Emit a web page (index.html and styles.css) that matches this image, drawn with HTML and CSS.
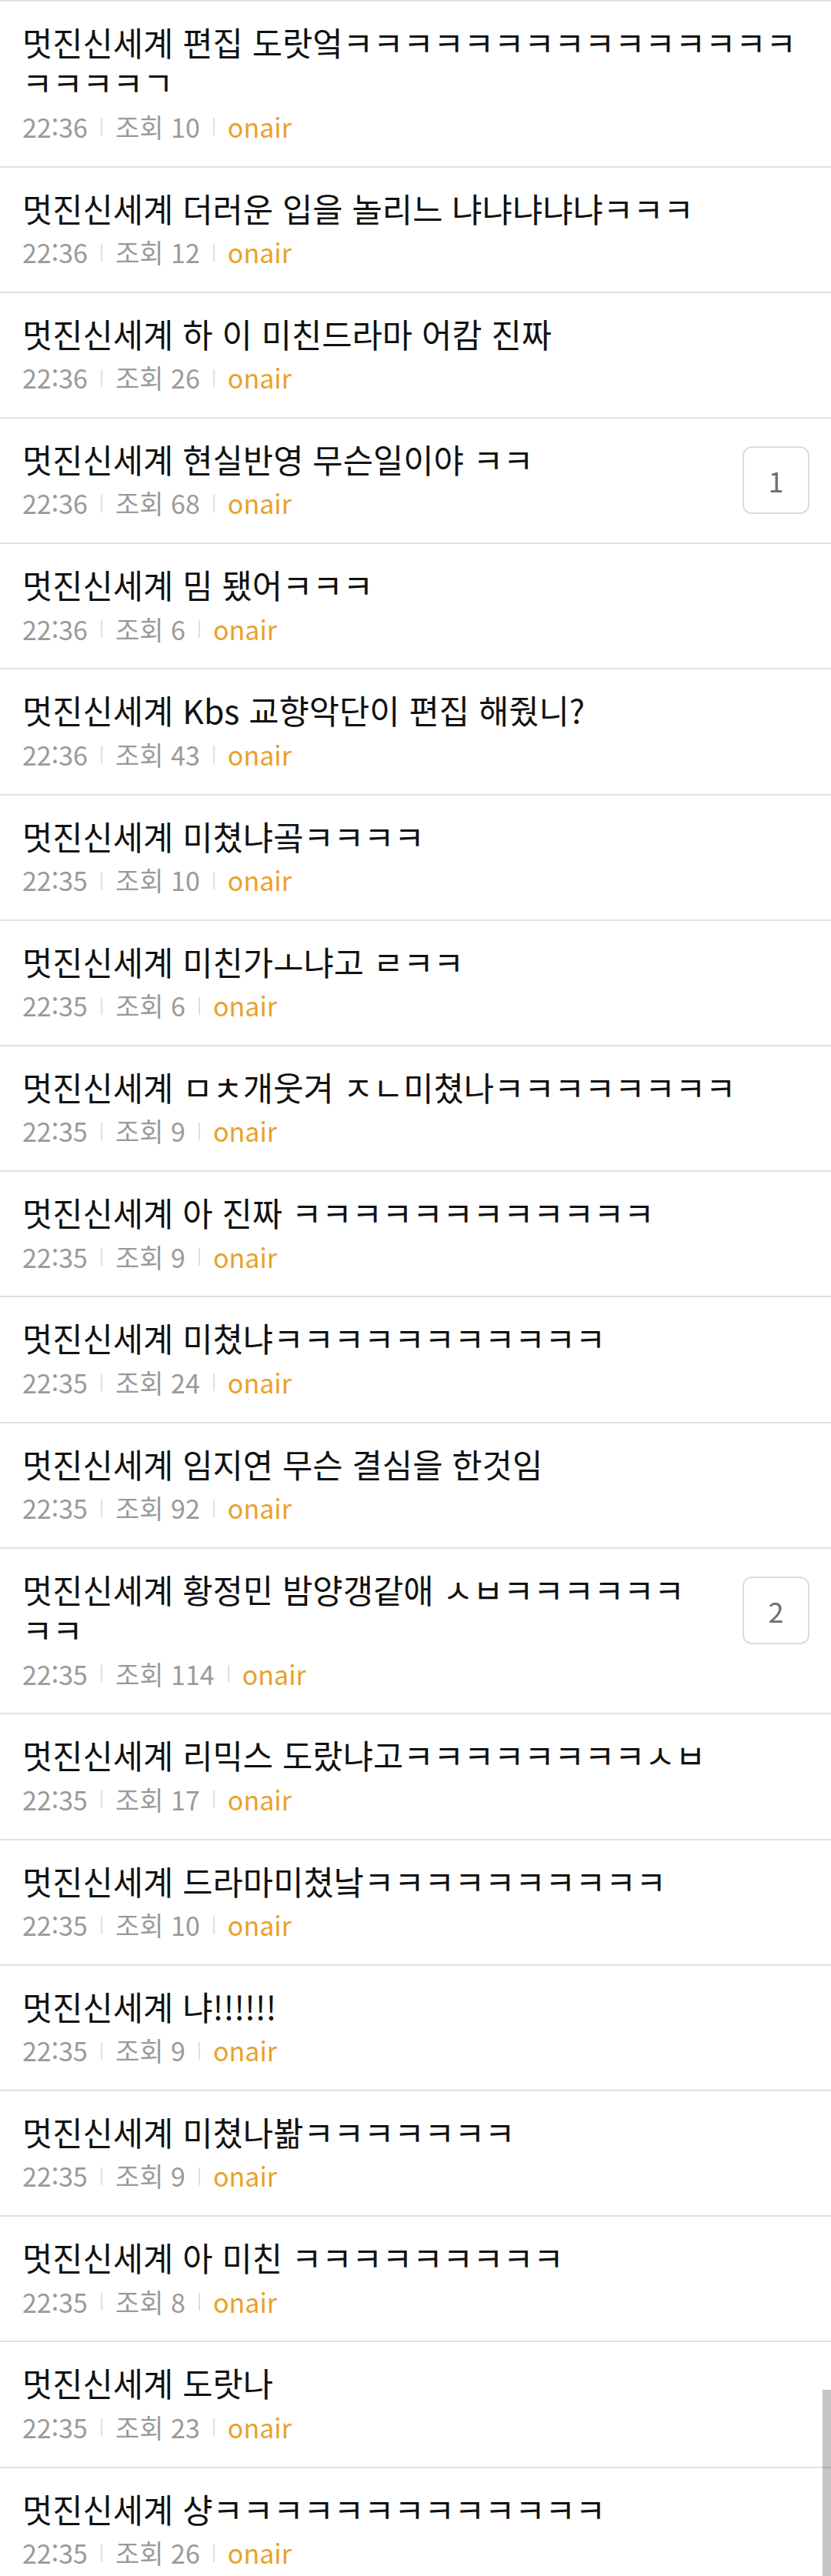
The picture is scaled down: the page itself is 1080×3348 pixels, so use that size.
FILE: index.html
```html
<!DOCTYPE html>
<html lang="ko">
<head>
  <meta charset="UTF-8" />
  <meta name="viewport" content="width=device-width, initial-scale=1.0"/>
  <title>onair 게시판</title>
  <link rel="stylesheet" href="styles.css">
</head>
<body>

  <ul class="list">
    <li class="item">
      <a href="#" class="item-link">
        <div class="item-body">
          <p class="title">멋진신세계 편집 도랏엌ㅋㅋㅋㅋㅋㅋㅋㅋㅋㅋㅋㅋㅋㅋㅋㅋㅋㅋㅋㄱ</p>
          <div class="meta"><span>22:36</span><span class="bar"></span><span>조회 10</span><span class="bar"></span><span class="board">onair</span></div>
        </div>
      </a>
    </li>
    <li class="item">
      <a href="#" class="item-link">
        <div class="item-body">
          <p class="title">멋진신세계 더러운 입을 놀리느 냐냐냐냐냐ㅋㅋㅋ</p>
          <div class="meta"><span>22:36</span><span class="bar"></span><span>조회 12</span><span class="bar"></span><span class="board">onair</span></div>
        </div>
      </a>
    </li>
    <li class="item">
      <a href="#" class="item-link">
        <div class="item-body">
          <p class="title">멋진신세계 하 이 미친드라마 어캄 진짜</p>
          <div class="meta"><span>22:36</span><span class="bar"></span><span>조회 26</span><span class="bar"></span><span class="board">onair</span></div>
        </div>
      </a>
    </li>
    <li class="item">
      <a href="#" class="item-link">
        <div class="item-body">
          <p class="title">멋진신세계 현실반영 무슨일이야 ㅋㅋ</p>
          <div class="meta"><span>22:36</span><span class="bar"></span><span>조회 68</span><span class="bar"></span><span class="board">onair</span></div>
        </div>
        <span class="cmt">1</span>
      </a>
    </li>
    <li class="item">
      <a href="#" class="item-link">
        <div class="item-body">
          <p class="title">멋진신세계 밈 됐어ㅋㅋㅋ</p>
          <div class="meta"><span>22:36</span><span class="bar"></span><span>조회 6</span><span class="bar"></span><span class="board">onair</span></div>
        </div>
      </a>
    </li>
    <li class="item">
      <a href="#" class="item-link">
        <div class="item-body">
          <p class="title">멋진신세계 Kbs 교향악단이 편집 해줬니?</p>
          <div class="meta"><span>22:36</span><span class="bar"></span><span>조회 43</span><span class="bar"></span><span class="board">onair</span></div>
        </div>
      </a>
    </li>
    <li class="item">
      <a href="#" class="item-link">
        <div class="item-body">
          <p class="title">멋진신세계 미쳤냐곸ㅋㅋㅋㅋ</p>
          <div class="meta"><span>22:35</span><span class="bar"></span><span>조회 10</span><span class="bar"></span><span class="board">onair</span></div>
        </div>
      </a>
    </li>
    <li class="item">
      <a href="#" class="item-link">
        <div class="item-body">
          <p class="title">멋진신세계 미친가ㅗ냐고 ㄹㅋㅋ</p>
          <div class="meta"><span>22:35</span><span class="bar"></span><span>조회 6</span><span class="bar"></span><span class="board">onair</span></div>
        </div>
      </a>
    </li>
    <li class="item">
      <a href="#" class="item-link">
        <div class="item-body">
          <p class="title">멋진신세계 ㅁㅊ개웃겨 ㅈㄴ미쳤나ㅋㅋㅋㅋㅋㅋㅋㅋ</p>
          <div class="meta"><span>22:35</span><span class="bar"></span><span>조회 9</span><span class="bar"></span><span class="board">onair</span></div>
        </div>
      </a>
    </li>
    <li class="item">
      <a href="#" class="item-link">
        <div class="item-body">
          <p class="title">멋진신세계 아 진짜 ㅋㅋㅋㅋㅋㅋㅋㅋㅋㅋㅋㅋ</p>
          <div class="meta"><span>22:35</span><span class="bar"></span><span>조회 9</span><span class="bar"></span><span class="board">onair</span></div>
        </div>
      </a>
    </li>
    <li class="item">
      <a href="#" class="item-link">
        <div class="item-body">
          <p class="title">멋진신세계 미쳤냐ㅋㅋㅋㅋㅋㅋㅋㅋㅋㅋㅋ</p>
          <div class="meta"><span>22:35</span><span class="bar"></span><span>조회 24</span><span class="bar"></span><span class="board">onair</span></div>
        </div>
      </a>
    </li>
    <li class="item">
      <a href="#" class="item-link">
        <div class="item-body">
          <p class="title">멋진신세계 임지연 무슨 결심을 한것임</p>
          <div class="meta"><span>22:35</span><span class="bar"></span><span>조회 92</span><span class="bar"></span><span class="board">onair</span></div>
        </div>
      </a>
    </li>
    <li class="item">
      <a href="#" class="item-link">
        <div class="item-body">
          <p class="title">멋진신세계 황정민 밤양갱같애 ㅅㅂㅋㅋㅋㅋㅋㅋㅋㅋ</p>
          <div class="meta"><span>22:35</span><span class="bar"></span><span>조회 114</span><span class="bar"></span><span class="board">onair</span></div>
        </div>
        <span class="cmt">2</span>
      </a>
    </li>
    <li class="item">
      <a href="#" class="item-link">
        <div class="item-body">
          <p class="title">멋진신세계 리믹스 도랐냐고ㅋㅋㅋㅋㅋㅋㅋㅋㅅㅂ</p>
          <div class="meta"><span>22:35</span><span class="bar"></span><span>조회 17</span><span class="bar"></span><span class="board">onair</span></div>
        </div>
      </a>
    </li>
    <li class="item">
      <a href="#" class="item-link">
        <div class="item-body">
          <p class="title">멋진신세계 드라마미쳤낰ㅋㅋㅋㅋㅋㅋㅋㅋㅋㅋ</p>
          <div class="meta"><span>22:35</span><span class="bar"></span><span>조회 10</span><span class="bar"></span><span class="board">onair</span></div>
        </div>
      </a>
    </li>
    <li class="item">
      <a href="#" class="item-link">
        <div class="item-body">
          <p class="title">멋진신세계 냐!!!!!!</p>
          <div class="meta"><span>22:35</span><span class="bar"></span><span>조회 9</span><span class="bar"></span><span class="board">onair</span></div>
        </div>
      </a>
    </li>
    <li class="item">
      <a href="#" class="item-link">
        <div class="item-body">
          <p class="title">멋진신세계 미쳤나봚ㅋㅋㅋㅋㅋㅋㅋ</p>
          <div class="meta"><span>22:35</span><span class="bar"></span><span>조회 9</span><span class="bar"></span><span class="board">onair</span></div>
        </div>
      </a>
    </li>
    <li class="item">
      <a href="#" class="item-link">
        <div class="item-body">
          <p class="title">멋진신세계 아 미친 ㅋㅋㅋㅋㅋㅋㅋㅋㅋ</p>
          <div class="meta"><span>22:35</span><span class="bar"></span><span>조회 8</span><span class="bar"></span><span class="board">onair</span></div>
        </div>
      </a>
    </li>
    <li class="item">
      <a href="#" class="item-link">
        <div class="item-body">
          <p class="title">멋진신세계 도랏나</p>
          <div class="meta"><span>22:35</span><span class="bar"></span><span>조회 23</span><span class="bar"></span><span class="board">onair</span></div>
        </div>
      </a>
    </li>
    <li class="item">
      <a href="#" class="item-link">
        <div class="item-body">
          <p class="title">멋진신세계 샹ㅋㅋㅋㅋㅋㅋㅋㅋㅋㅋㅋㅋㅋ</p>
          <div class="meta"><span>22:35</span><span class="bar"></span><span>조회 26</span><span class="bar"></span><span class="board">onair</span></div>
        </div>
      </a>
    </li>
  </ul>

  <div class="scroll-thumb"></div>

</body>
</html>
```

FILE: styles.css
```css
* {
  margin: 0;
  padding: 0;
  box-sizing: border-box;
}

html, body {
  height: 100%;
  overflow: hidden;
}

body {
  font-family: "Noto Sans CJK KR", "Noto Sans", sans-serif;
  background: #fff;
  color: #111;
}

.list {
  list-style: none;
}

.item {
  border-top: 2px solid #e1e1e1;
}

.item-link {
  display: flex;
  align-items: flex-start;
  padding: 26px 28px 28.8px 29px;
  color: inherit;
  text-decoration: none;
}

.item-body {
  flex: 1;
  min-width: 0;
}

.title {
  font-size: 42.7px;
  line-height: 52.4px;
  color: #111;
}

.meta {
  display: flex;
  align-items: center;
  margin-top: 10px;
  font-size: 34px;
  line-height: 44px;
  color: #9a9a9a;
}

.bar {
  width: 2px;
  height: 23px;
  margin: 0 17px;
  background: #e0e0e0;
}

.board {
  color: #e9a12b;
}

/* comment count box */
.cmt {
  flex: none;
  display: flex;
  align-items: center;
  justify-content: center;
  width: 87px;
  height: 88px;
  margin: 10px 0 0 56px;
  border: 2px solid #dcdcdc;
  border-radius: 12px;
  font-size: 36px;
  color: #6e6e6e;
}

.scroll-thumb {
  position: fixed;
  right: 0;
  bottom: 0;
  width: 11px;
  height: 242px;
  background: rgba(0, 0, 0, 0.23);
}
```
